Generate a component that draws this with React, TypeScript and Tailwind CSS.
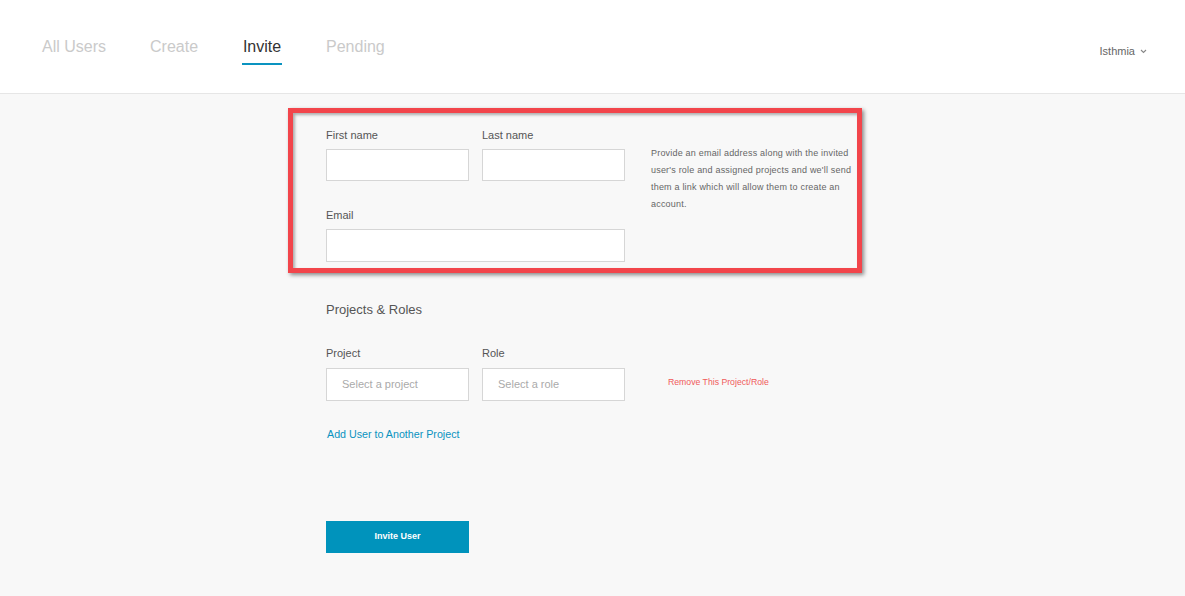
const tabs = ["All Users", "Create", "Invite", "Pending"];

function Field({ label, className }: { label: string; className: string }) {
  return (
    <div className={className}>
      <p className="text-[11px] leading-[13px] text-[#555]">{label}</p>
      <div className="mt-[7px] h-8 border border-[#d6d6d6] bg-white" />
    </div>
  );
}

function SelectBox({ label, placeholder }: { label: string; placeholder: string }) {
  return (
    <div className="w-[143px]">
      <p className="text-[11px] leading-[13px] text-[#555]">{label}</p>
      <div className="mt-2 flex h-[33px] items-center border border-[#d6d6d6] bg-white pl-[15px] text-[11px] text-[#aaa]">
        {placeholder}
      </div>
    </div>
  );
}

export default function App() {
  return (
    <div className="relative min-h-[596px] bg-[#f8f8f8] font-['Liberation_Sans',Arial,sans-serif]">
      <header className="flex h-[94px] items-start justify-between border-b border-[#e6e6e6] bg-white pl-[42px] pr-[38px]">
        <nav className="mt-[37px] flex gap-[44px]">
          {tabs.map((t) => (
            <div key={t} className="flex flex-col items-center">
              <span
                className={
                  t === "Invite"
                    ? "text-[16px] leading-[19px] text-[#333]"
                    : "text-[16px] leading-[19px] text-[#cacaca]"
                }
              >
                {t}
              </span>
              {t === "Invite" && <span className="mt-[7px] h-[2px] w-[40px] bg-[#0a93c0]" />}
            </div>
          ))}
        </nav>
        <div className="mt-[45px] flex items-center gap-[5px] text-[11px] leading-[13px] text-[#666]">
          Isthmia
          <svg width="7" height="5" viewBox="0 0 7 5" fill="none" stroke="#888" strokeWidth="1.1">
            <path d="M1 1l2.5 2.5L6 1" />
          </svg>
        </div>
      </header>

      <main className="pl-[326px]">
        <div className="flex pt-[35px]">
          <div className="w-[299px]">
            <div className="flex gap-[13px]">
              <Field label="First name" className="w-[143px]" />
              <Field label="Last name" className="w-[143px]" />
            </div>
            <div className="mt-[28px]">
              <p className="text-[11px] leading-[13px] text-[#555]">Email</p>
              <div className="mt-[7px] h-[33px] border border-[#d6d6d6] bg-white" />
            </div>
          </div>
          <p className="ml-[26px] mt-[16px] w-[210px] text-[9px] leading-[17px] tracking-[0.2px] text-[#666]">
            Provide an email address along with the invited user's role and assigned projects and we'll send them a link which will allow them to create an account.
          </p>
        </div>

        <h2 className="mt-[40px] text-[13px] leading-[16px] text-[#555]">Projects &amp; Roles</h2>

        <div className="mt-[29px] flex items-end gap-[13px]">
          <SelectBox label="Project" placeholder="Select a project" />
          <SelectBox label="Role" placeholder="Select a role" />
          <span className="mb-[12px] ml-[30px] text-[8.7px] text-[#f05a5a]">Remove This Project/Role</span>
        </div>

        <p className="mt-[27px] pl-px text-[10.7px] leading-[13px] text-[#0a93c0]">Add User to Another Project</p>

        <button className="mt-[80px] h-8 w-[143px] bg-[#0093bc] text-[9px] font-bold text-white">
          Invite User
        </button>
      </main>

      <div className="pointer-events-none absolute left-[288px] top-[108px] h-[165px] w-[574px] border-[5px] border-[#f2454b] shadow-[2px_2px_4px_rgba(0,0,0,0.45),inset_2px_2px_3px_rgba(0,0,0,0.3)]" />
    </div>
  );
}
